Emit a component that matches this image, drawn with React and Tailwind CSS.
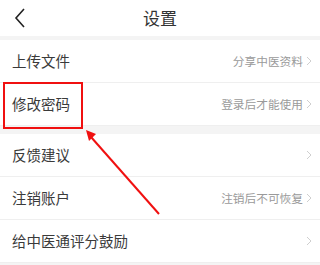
import React from 'react';

const font = { fontFamily: '"Noto Sans CJK SC", "Noto Sans", sans-serif' };

const groups = [
  [
    { label: '上传文件', hint: '分享中医资料' },
    { label: '修改密码', hint: '登录后才能使用' },
  ],
  [
    { label: '反馈建议', hint: '' },
    { label: '注销账户', hint: '注销后不可恢复' },
    { label: '给中医通评分鼓励', hint: '' },
  ],
];

const Chevron = () => (
  <svg width="6" height="10" viewBox="0 0 6 10" className="ml-[3px]">
    <path d="M1 1 L5 5 L1 9" fill="none" stroke="#cfcfcf" strokeWidth="1" />
  </svg>
);

const Row = ({ label, hint }) => (
  <div className="flex h-[43px] items-center border-b border-[#efefef] bg-white pl-[12px] pr-[8px]">
    <span className="flex-1 text-[14.5px] text-[#3a3a3a]">{label}</span>
    {hint && <span className="text-[11.7px] text-[#9a9a9a]">{hint}</span>}
    <Chevron />
  </div>
);

export default function App() {
  return (
    <div className="relative h-[265px] w-[320px] overflow-hidden bg-[#f4f4f4]" style={font}>
      <div className="relative flex h-[36px] items-center justify-center bg-white">
        <svg width="12" height="20" viewBox="0 0 12 20" className="absolute left-[14px] top-[8px]">
          <path d="M10 1 L2 10 L10 19" fill="none" stroke="#222" strokeWidth="1.6" />
        </svg>
        <span className="text-[17px] text-[#333]">设置</span>
      </div>
      <div className="mt-[4px]">
        {groups[0].map((r) => (
          <Row key={r.label} {...r} />
        ))}
      </div>
      <div className="mt-[8px]">
        {groups[1].map((r) => (
          <Row key={r.label} {...r} />
        ))}
      </div>

      <div className="absolute left-[3px] top-[82px] h-[47px] w-[80px] border-2 border-[#f01010]" />
      <svg className="absolute left-0 top-0" width="320" height="265" viewBox="0 0 320 265">
        <line x1="159" y1="214" x2="91" y2="137" stroke="#f01010" strokeWidth="2" />
        <polygon points="86,130 96,134 89,141" fill="#f01010" />
      </svg>
    </div>
  );
}
